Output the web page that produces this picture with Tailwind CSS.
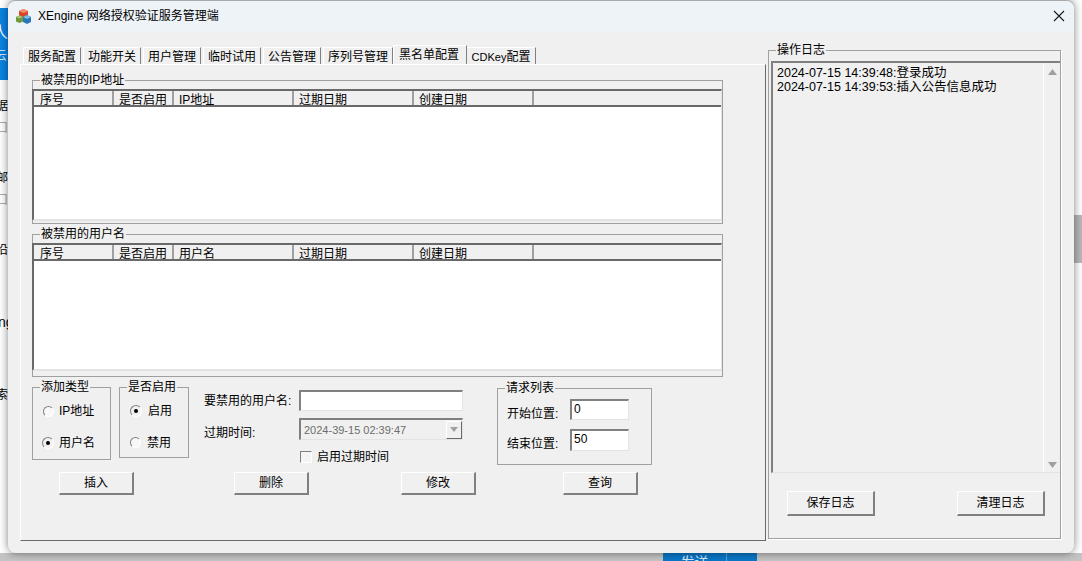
<!DOCTYPE html>
<html lang="zh-CN">
<head>
    <meta charset="UTF-8">
    <title>XEngine 网络授权验证服务管理端</title>
    <script src="https://cdn.jsdelivr.net/npm/@tailwindcss/browser@4"></script>
</head>
<body class="w-[1082px] h-[561px] overflow-hidden bg-white relative text-[12px] leading-[16px] text-black font-['Liberation_Sans','Noto_Sans_CJK_SC',sans-serif]">

    <!-- page behind the dialog -->
    <div class="absolute left-0 top-[8px] w-[30px] h-[72px] bg-[#0a84e3]"></div>
    <div class="absolute left-[-8px] top-[25px] text-[16px] text-white">人</div>
    <div class="absolute left-[-5px] top-[48px] text-[#cfe6fa]">云</div>
    <div class="absolute left-[-4px] top-[98px]">据</div>
    <div class="absolute left-[-4px] top-[120px] text-[#aaa]">口</div>
    <div class="absolute left-[-4px] top-[170px]">邮</div>
    <div class="absolute left-[-4px] top-[192px] text-[#aaa]">口</div>
    <div class="absolute left-[-4px] top-[242px]">沿</div>
    <div class="absolute left-[-2px] top-[314px] text-[14px]">ng</div>
    <div class="absolute left-[-4px] top-[387px]">索</div>
    <div class="absolute left-[1074px] top-[215px] w-[8px] h-[48px] bg-[#b8b8b8]"></div>
    <div class="absolute left-0 top-[553px] w-[1082px] h-[8px] bg-[#c4c4c4]"></div>
    <div class="absolute left-[663px] top-[553px] w-[94px] h-[8px] bg-[#0a78c8] overflow-hidden flex">
        <div class="w-[64px] border-r border-[#5aa5dc] text-center text-[#dbeafe] text-[14px] pt-[1px]">发送</div>
    </div>

    <!-- dialog window -->
    <div class="absolute left-[8px] top-0 w-[1066px] h-[553px] bg-[#f0f0f0] rounded-[8px] overflow-hidden border-t border-[#a8a8a8] shadow-[0_0_9px_rgba(0,0,0,0.5)] flex flex-col">

        <!-- title bar -->
        <div class="h-[30px] shrink-0 bg-[#eef3f8] flex items-center pl-[8px] pr-[9px]">
            <svg class="w-[16px] h-[16px]" viewBox="0 0 16 16">
                <path d="M3 3l4.500-2L12 3v5l-4.500 2L3 8z" fill="#d9472b"/>
                <path d="M3 3l4.500-2L12 3 7.500 5z" fill="#f0906c"/>
                <path d="M0 9l3.500-1.500L7 9v4.500L3.500 15 0 13.500z" fill="#6f9a3c"/>
                <path d="M0 9l3.500-1.500L7 9l-3.500 1.500z" fill="#a9c66f"/>
                <path d="M7 9l4-2 4 2v5l-4 2-4-2z" fill="#2a78b8"/>
                <path d="M7 9l4-2 4 2-4 2z" fill="#7dbbe8"/>
            </svg>
            <span class="ml-[6px]">XEngine 网络授权验证服务管理端</span>
            <svg class="ml-auto w-[12px] h-[12px]" viewBox="0 0 12 12" fill="none" stroke="#1a1a1a" stroke-width="1.100">
                <path d="M1 1l10 10M11 1L1 11"/>
            </svg>
        </div>

        <div class="flex-1 flex">

            <!-- left tab control -->
            <div class="w-[746px] ml-[12px] shrink-0 flex flex-col">
                <div class="h-[33px] shrink-0 flex items-end pl-[3px]">
                    <div class="flex items-end">
                        <div class="w-[58px] h-[17px] mr-[2px] border-t border-l border-t-white border-l-white border-r border-r-[#808080] text-center leading-[19px]">服务配置</div>
                        <div class="w-[58px] h-[17px] mr-[2px] border-t border-l border-t-white border-l-white border-r border-r-[#808080] text-center leading-[19px]">功能开关</div>
                        <div class="w-[58px] h-[17px] mr-[2px] border-t border-l border-t-white border-l-white border-r border-r-[#808080] text-center leading-[19px]">用户管理</div>
                        <div class="w-[58px] h-[17px] mr-[2px] border-t border-l border-t-white border-l-white border-r border-r-[#808080] text-center leading-[19px]">临时试用</div>
                        <div class="w-[58px] h-[17px] mr-[2px] border-t border-l border-t-white border-l-white border-r border-r-[#808080] text-center leading-[19px]">公告管理</div>
                        <div class="w-[70px] h-[17px] border-t border-l border-t-white border-l-white border-r border-r-[#808080] text-center leading-[19px]">序列号管理</div>
                        <div class="w-[74px] h-[19px] pr-[2px] border-t border-l border-t-white border-l-white border-r border-r-[#808080] text-center leading-[18px]">黑名单配置</div>
                        <div class="w-[69px] h-[17px] border-t border-t-white border-r border-r-[#808080] text-center leading-[19px]"><span class="text-[11px]">CDKey</span>配置</div>
                    </div>
                </div>

                <div class="h-[477px] border-t border-l border-t-white border-l-white border-r border-b border-r-[#696969] border-b-[#696969] pl-[11px] pt-[7px]">

                    <!-- banned ip -->
                    <fieldset class="w-[690px] h-[152px] border border-[#a0a0a0]">
                        <legend class="ml-[7px] px-[1px] leading-[16px]">被禁用的IP地址</legend>
                        <div class="-ml-px h-[132px] mt-[1px] w-[690px] border-t-2 border-l-2 border-t-[#696969] border-l-[#696969] border-b-2 border-r border-b-[#e3e3e3] border-r-[#e3e3e3] bg-white flex flex-col">
                            <div class="h-[16px] bg-[#f0f0f0] border-b-2 border-[#696969] flex overflow-hidden leading-[19px]">
                                <div class="w-[80px] pl-[6px] border-r-2 border-r-[#a0a0a0]">序号</div>
                                <div class="w-[60px] pl-[5px] border-r-2 border-r-[#a0a0a0]">是否启用</div>
                                <div class="w-[120px] pl-[5px] border-r-2 border-r-[#a0a0a0]">IP地址</div>
                                <div class="w-[120px] pl-[5px] border-r-2 border-r-[#a0a0a0]">过期日期</div>
                                <div class="w-[120px] pl-[5px] border-r-2 border-r-[#a0a0a0]">创建日期</div>
                            </div>
                        </div>
                    </fieldset>

                    <!-- banned user -->
                    <fieldset class="mt-[2px] w-[690px] h-[151px] border border-[#a0a0a0]">
                        <legend class="ml-[7px] px-[1px] leading-[16px]">被禁用的用户名</legend>
                        <div class="-ml-px h-[128px] mt-[1px] w-[690px] border-t-2 border-l-2 border-t-[#696969] border-l-[#696969] border-b-2 border-r border-b-[#e3e3e3] border-r-[#e3e3e3] bg-white flex flex-col">
                            <div class="h-[16px] bg-[#f0f0f0] border-b-2 border-[#696969] flex overflow-hidden leading-[19px]">
                                <div class="w-[80px] pl-[6px] border-r-2 border-r-[#a0a0a0]">序号</div>
                                <div class="w-[60px] pl-[5px] border-r-2 border-r-[#a0a0a0]">是否启用</div>
                                <div class="w-[120px] pl-[5px] border-r-2 border-r-[#a0a0a0]">用户名</div>
                                <div class="w-[120px] pl-[5px] border-r-2 border-r-[#a0a0a0]">过期日期</div>
                                <div class="w-[120px] pl-[5px] border-r-2 border-r-[#a0a0a0]">创建日期</div>
                            </div>
                        </div>
                    </fieldset>

                    <!-- add form -->
                    <div class="h-[93px] mt-[2px] flex items-start">
                        <fieldset class="w-[79px] h-[81px] border border-[#a0a0a0]">
                            <legend class="ml-[7px] px-[1px] leading-[16px]">添加类型</legend>
                            <div class="pl-[10px] pt-[7px] flex items-center h-[25px]">
                                <div class="w-[11px] h-[11px] rounded-full border border-t-[#808080] border-l-[#808080] border-b-white border-r-white bg-[#f8f8f8]"></div>
                                <span class="ml-[5px]">IP地址</span>
                            </div>
                            <div class="pl-[9px] pt-[10px] flex items-center h-[35px]">
                                <div class="w-[12px] h-[12px] rounded-full border border-t-[#808080] border-l-[#808080] border-b-white border-r-white bg-[#f0f0f0] flex items-center justify-center"><div class="w-[4px] h-[4px] rounded-full bg-black"></div></div>
                                <span class="ml-[5px]">用户名</span>
                            </div>
                        </fieldset>
                        <fieldset class="ml-[8px] w-[70px] h-[79px] border border-[#a0a0a0]">
                            <legend class="ml-[7px] px-[1px] leading-[16px]">是否启用</legend>
                            <div class="pl-[10px] pt-[7px] flex items-center h-[25px]">
                                <div class="w-[12px] h-[12px] rounded-full border border-t-[#808080] border-l-[#808080] border-b-white border-r-white bg-[#f0f0f0] flex items-center justify-center"><div class="w-[4px] h-[4px] rounded-full bg-black"></div></div>
                                <span class="ml-[6px]">启用</span>
                            </div>
                            <div class="pl-[10px] pt-[10px] flex items-center h-[35px]">
                                <div class="w-[11px] h-[11px] rounded-full border border-t-[#808080] border-l-[#808080] border-b-white border-r-white bg-[#f8f8f8]"></div>
                                <span class="ml-[6px]">禁用</span>
                            </div>
                        </fieldset>

                        <div class="ml-[15px] mt-[11px] w-[260px] grid grid-cols-[95px_164px] items-center">
                            <span>要禁用的用户名:</span>
                            <div class="h-[21px] border-t-2 border-l-2 border-t-[#808080] border-l-[#808080] border-b border-r border-b-[#e3e3e3] border-r-[#e3e3e3] bg-white"></div>
                            <span class="mt-[7px] pt-[7px] self-start">过期时间:</span>
                            <div class="mt-[7px] self-start h-[22px] border-t-2 border-l-2 border-t-[#808080] border-l-[#808080] border-b border-r border-b-[#e3e3e3] border-r-[#e3e3e3] bg-[#f0f0f0] flex items-center text-[#6d6d6d] text-[11px] pl-[3px]">
                                <span>2024-39-15 02:39:47</span>
                                <div class="ml-auto w-[16px] h-[18px] border border-t-white border-l-white border-b-[#696969] border-r-[#696969] flex items-center justify-center">
                                    <svg class="w-[8px] h-[5px]" viewBox="0 0 8 5"><path d="M0 0h8L4 5z" fill="#a0a0a0"/></svg>
                                </div>
                            </div>
                            <span></span>
                            <div class="mt-[8px] flex items-center pl-[1px]">
                                <div class="w-[12px] h-[12px] border border-t-[#808080] border-l-[#808080] border-b-white border-r-white bg-[#f4f4f4]"></div>
                                <span class="ml-[5px]">启用过期时间</span>
                            </div>
                        </div>

                        <fieldset class="ml-[33px] mt-[1px] w-[155px] h-[85px] border border-[#a0a0a0]">
                            <legend class="ml-[7px] px-[1px] leading-[16px]">请求列表</legend>
                            <div class="pl-[9px] pt-[3px] grid grid-cols-[63px_59px] gap-y-[7px]">
                                <span class="pt-[7px]">开始位置:</span>
                                <div class="h-[21px] border-t-2 border-l-2 border-t-[#808080] border-l-[#808080] border-b border-r border-b-[#e3e3e3] border-r-[#e3e3e3] bg-white pl-[2px] leading-[16px]">0</div>
                                <span class="pt-[7px]">结束位置:</span>
                                <div class="h-[22px] border-t-2 border-l-2 border-t-[#808080] border-l-[#808080] border-b border-r border-b-[#e3e3e3] border-r-[#e3e3e3] bg-white pl-[2px] leading-[16px]">50</div>
                            </div>
                        </fieldset>
                    </div>

                    <!-- form actions -->
                    <div class="flex ml-[27px]">
                        <div class="w-[75px] h-[23px] border-t border-l border-t-white border-l-white border-b-2 border-r-2 border-b-[#808080] border-r-[#808080] text-center leading-[20px]">插入</div>
                        <div class="w-[75px] h-[23px] ml-[100px] border-t border-l border-t-white border-l-white border-b-2 border-r-2 border-b-[#808080] border-r-[#808080] text-center leading-[20px]">删除</div>
                        <div class="w-[75px] h-[23px] ml-[92px] border-t border-l border-t-white border-l-white border-b-2 border-r-2 border-b-[#808080] border-r-[#808080] text-center leading-[20px]">修改</div>
                        <div class="w-[75px] h-[23px] ml-[87px] border-t border-l border-t-white border-l-white border-b-2 border-r-2 border-b-[#808080] border-r-[#808080] text-center leading-[20px]">查询</div>
                    </div>
                </div>
            </div>

            <!-- right log panel -->
            <fieldset class="ml-[2px] mt-[11px] w-[293px] h-[497px] border border-[#a0a0a0] shadow-[1px_1px_0_#fff]">
                <legend class="ml-[7px] px-[1px] leading-[16px]">操作日志</legend>
                <div class="ml-[2px] mt-[3px] h-[412px] border-t-2 border-l-2 border-t-[#808080] border-l-[#808080] border-b border-b-[#e3e3e3] flex">
                    <div class="flex-1 pl-[4px] pt-[3px] leading-[14px] whitespace-pre text-[12.500px]">2024-07-15 14:39:48:登录成功
2024-07-15 14:39:53:插入公告信息成功</div>
                    <div class="w-[17px] border-l border-l-white flex flex-col items-center justify-between pt-[6px] pb-[4px]">
                        <svg class="w-[9px] h-[6px]" viewBox="0 0 9 6"><path d="M0 6h9L4.500 0z" fill="#a0a0a0"/></svg>
                        <svg class="w-[9px] h-[6px]" viewBox="0 0 9 6"><path d="M0 0h9L4.500 6z" fill="#a0a0a0"/></svg>
                    </div>
                </div>
                <div class="flex pl-[18px] mt-[18px]">
                    <div class="w-[88px] h-[25px] border-t border-l border-t-white border-l-white border-b-2 border-r-2 border-b-[#808080] border-r-[#808080] text-center leading-[23px]">保存日志</div>
                    <div class="w-[88px] h-[25px] ml-[82px] border-t border-l border-t-white border-l-white border-b-2 border-r-2 border-b-[#808080] border-r-[#808080] text-center leading-[23px]">清理日志</div>
                </div>
            </fieldset>
        </div>
    </div>
</body>
</html>
